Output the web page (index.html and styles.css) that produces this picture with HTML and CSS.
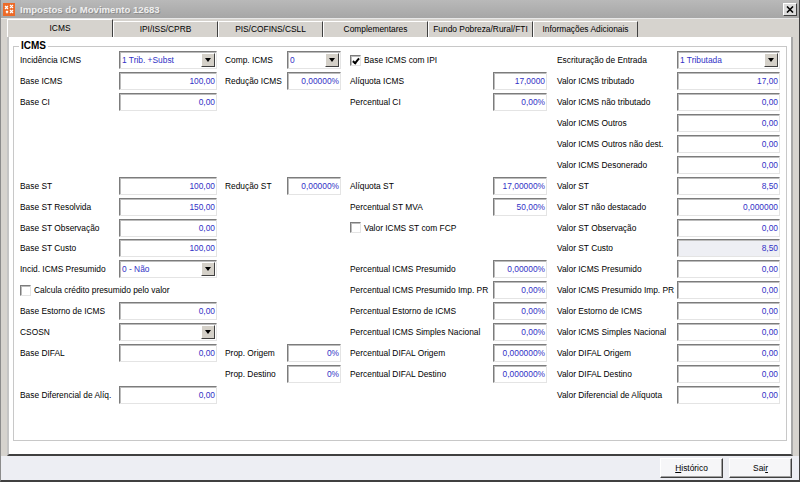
FILE: index.html
```html
<!DOCTYPE html>
<html lang="pt-BR">

<head>
  <meta charset="UTF-8" />
  <meta name="viewport" content="width=device-width, initial-scale=1.0" />
  <title>Impostos do Movimento 12683</title>
  <link rel="stylesheet" href="styles.css">
</head>

<body>
  <div class="window">
    <div class="titlebar">
      <svg class="app-icon" width="12" height="13" viewBox="0 0 12 13">
        <rect width="12" height="13" fill="#ec6a28" />
        <path d="M2 3l3 3M5 3L2 6M7 7l3 3M10 7l-3 3M3 8l2 2M5 8l-2 2M7 2l3 3M10 2L7 5" stroke="#fff" stroke-width="1.2" />
      </svg>
      <span class="title">Impostos do Movimento 12683</span>
      <button class="close">
        <svg width="8" height="7" viewBox="0 0 8 7"><path d="M1 0.5l6 6M7 0.5l-6 6" stroke="#000" stroke-width="1.6" /></svg>
      </button>
    </div>

    <ul class="tabs">
      <li class="active">ICMS</li>
      <li>IPI/ISS/CPRB</li>
      <li>PIS/COFINS/CSLL</li>
      <li>Complementares</li>
      <li>Fundo Pobreza/Rural/FTI</li>
      <li>Informações Adicionais</li>
    </ul>

    <div class="panel">
      <fieldset class="group">
        <legend>ICMS</legend>
        <div class="form">
          <!-- linha 1 -->
          <span class="lbl">Incidência ICMS</span>
          <div class="combo"><span>1 Trib. +Subst</span><i class="arrow"></i></div>
          <span class="lbl c3">Comp. ICMS</span>
          <div class="combo"><span>0</span><i class="arrow"></i></div>
          <label class="check c5 span2"><i class="box checked"></i>Base ICMS com IPI</label>
          <span class="lbl c7">Escrituração de Entrada</span>
          <div class="combo"><span>1 Tributada</span><i class="arrow"></i></div>

          <span class="lbl">Base ICMS</span>
          <div class="field">100,00</div>
          <span class="lbl c3">Redução ICMS</span>
          <div class="field">0,00000%</div>
          <span class="lbl c5">Alíquota ICMS</span>
          <div class="field">17,0000</div>
          <span class="lbl c7">Valor ICMS tributado</span>
          <div class="field">17,00</div>

          <span class="lbl">Base CI</span>
          <div class="field">0,00</div>
          <span class="span2"></span>
          <span class="lbl c5">Percentual CI</span>
          <div class="field">0,00%</div>
          <span class="lbl c7">Valor ICMS não tributado</span>
          <div class="field">0,00</div>

          <span class="span6"></span>
          <span class="lbl c7">Valor ICMS Outros</span>
          <div class="field">0,00</div>

          <span class="span6"></span>
          <span class="lbl c7">Valor ICMS Outros não dest.</span>
          <div class="field">0,00</div>

          <span class="span6"></span>
          <span class="lbl c7">Valor ICMS Desonerado</span>
          <div class="field">0,00</div>

          <!-- substituição tributária -->
          <span class="lbl">Base ST</span>
          <div class="field">100,00</div>
          <span class="lbl c3">Redução ST</span>
          <div class="field">0,00000%</div>
          <span class="lbl c5">Alíquota ST</span>
          <div class="field">17,00000%</div>
          <span class="lbl c7">Valor ST</span>
          <div class="field">8,50</div>

          <span class="lbl">Base ST Resolvida</span>
          <div class="field">150,00</div>
          <span class="span2"></span>
          <span class="lbl c5">Percentual ST MVA</span>
          <div class="field">50,00%</div>
          <span class="lbl c7">Valor ST não destacado</span>
          <div class="field">0,000000</div>

          <span class="lbl">Base ST Observação</span>
          <div class="field">0,00</div>
          <span class="span2"></span>
          <label class="check c5 span2"><i class="box"></i>Valor ICMS ST com FCP</label>
          <span class="lbl c7">Valor ST Observação</span>
          <div class="field">0,00</div>

          <span class="lbl">Base ST Custo</span>
          <div class="field">100,00</div>
          <span class="span4"></span>
          <span class="lbl c7">Valor ST Custo</span>
          <div class="field disabled">8,50</div>

          <!-- presumido -->
          <span class="lbl">Incid. ICMS Presumido</span>
          <div class="combo"><span>0 - Não</span><i class="arrow"></i></div>
          <span class="span2"></span>
          <span class="lbl c5">Percentual ICMS Presumido</span>
          <div class="field">0,00000%</div>
          <span class="lbl c7">Valor ICMS Presumido</span>
          <div class="field">0,00</div>

          <label class="check span4"><i class="box"></i>Calcula crédito presumido pelo valor</label>
          <span class="lbl c5">Percentual ICMS Presumido Imp. PR</span>
          <div class="field">0,00%</div>
          <span class="lbl c7">Valor ICMS Presumido Imp. PR</span>
          <div class="field">0,00</div>

          <span class="lbl">Base Estorno de ICMS</span>
          <div class="field">0,00</div>
          <span class="span2"></span>
          <span class="lbl c5">Percentual Estorno de ICMS</span>
          <div class="field">0,00%</div>
          <span class="lbl c7">Valor Estorno de ICMS</span>
          <div class="field">0,00</div>

          <span class="lbl">CSOSN</span>
          <div class="combo"><span></span><i class="arrow"></i></div>
          <span class="span2"></span>
          <span class="lbl c5">Percentual ICMS Simples Nacional</span>
          <div class="field">0,00%</div>
          <span class="lbl c7">Valor ICMS Simples Nacional</span>
          <div class="field">0,00</div>

          <!-- difal -->
          <span class="lbl">Base DIFAL</span>
          <div class="field">0,00</div>
          <span class="lbl c3">Prop. Origem</span>
          <div class="field">0%</div>
          <span class="lbl c5">Percentual DIFAL Origem</span>
          <div class="field">0,000000%</div>
          <span class="lbl c7">Valor DIFAL Origem</span>
          <div class="field">0,00</div>

          <span class="span2"></span>
          <span class="lbl c3">Prop. Destino</span>
          <div class="field">0%</div>
          <span class="lbl c5">Percentual DIFAL Destino</span>
          <div class="field">0,000000%</div>
          <span class="lbl c7">Valor DIFAL Destino</span>
          <div class="field">0,00</div>

          <span class="lbl">Base Diferencial de Alíq.</span>
          <div class="field">0,00</div>
          <span class="span4"></span>
          <span class="lbl c7">Valor Diferencial de Alíquota</span>
          <div class="field">0,00</div>
        </div>
      </fieldset>
    </div>

    <div class="footer">
      <button class="btn"><u>H</u>istórico</button>
      <button class="btn">Sai<u>r</u></button>
    </div>
  </div>
</body>

</html>
```

FILE: styles.css
```css
* {
  box-sizing: border-box;
}

body {
  margin: 0;
  font-family: "Liberation Sans", Arial, sans-serif;
  font-size: 8.4px;
  color: #000;
  background: #d6d3ce;
}

.window {
  width: 800px;
  height: 482px;
  display: flex;
  flex-direction: column;
  background: #d6d3ce;
  border-left: 1px solid #8c8c8c;
  border-right: 1px solid #404040;
  border-bottom: 2px solid #404040;
}

/* barra de título */
.titlebar {
  height: 19px;
  display: flex;
  align-items: center;
  padding: 0 2px 0 2px;
  background: linear-gradient(#b9b9b9, #a6a6a6);
  border-bottom: 1px solid #e8e8e8;
}

.app-icon {
  display: block;
  margin-right: 5px;
}

.title {
  flex: 1;
  font-size: 9.6px;
  font-weight: bold;
  color: #eeeeee;
  text-shadow: 1px 1px 0 #8e8e8e;
}

.close {
  width: 14px;
  height: 13px;
  padding: 0;
  display: flex;
  align-items: center;
  justify-content: center;
  background: #dcdcdc;
  border: 1px solid;
  border-color: #fff #404040 #404040 #fff;
}

/* abas */
.tabs {
  margin: 0;
  padding: 0 0 0 6px;
  list-style: none;
  display: flex;
  height: 18px;
}

.tabs li {
  width: 105px;
  height: 16px;
  margin-top: 2px;
  line-height: 14px;
  text-align: center;
  border-left: 1px solid #fff;
  border-top: 1px solid #fff;
  border-right: 1px solid #404040;
}

.tabs li.active {
  width: 106px;
  height: 18px;
  margin-top: 0;
  line-height: 16px;
}

/* painel branco */
.panel {
  flex: 1;
  margin: 0 6px;
  padding: 3px 4px 0 4px;
  background: #fff;
  border-left: 2px solid #c4c4c4;
  border-right: 2px solid #a8a8a8;
  border-bottom: 2px solid #404040;
}

.group {
  margin: 0;
  height: 401px;
  padding: 0 0 0 6px;
  border: 1px solid #c8c8c8;
}

.group legend {
  padding: 0 2px;
  margin-left: -1px;
  font-size: 10px;
  font-weight: bold;
  line-height: 12px;
}

.form {
  margin-top: -2px;
  display: grid;
  grid-template-columns: 99px 98px 70px 54px 152px 54px 130px 103px;
  grid-auto-rows: 20.9px;
  align-items: center;
}

.lbl {
  white-space: nowrap;
}

.c3 {
  padding-left: 8px;
}

.c5 {
  padding-left: 9px;
}

.c7 {
  padding-left: 10px;
}

.span2 {
  grid-column: span 2;
}

.span4 {
  grid-column: span 4;
}

.span6 {
  grid-column: span 6;
}

/* campos */
.field,
.combo {
  height: 18px;
  background: #fff;
  color: #3232c6;
  border: 1px solid;
  border-color: #7c7c7c #e4e4e4 #e4e4e4 #7c7c7c;
  box-shadow: inset 1px 1px 0 #bcbcbc;
}

.field {
  line-height: 16px;
  text-align: right;
  padding-right: 1px;
}

.field.disabled {
  background: #eeeff4;
}

.combo {
  display: flex;
  align-items: center;
  padding: 0 1px 0 2px;
}

.combo span {
  flex: 1;
  white-space: nowrap;
}

.arrow {
  width: 14px;
  height: 14px;
  display: flex;
  align-items: center;
  justify-content: center;
  background: #d4d0c8;
  border: 1px solid;
  border-color: #fff #404040 #404040 #fff;
}

.arrow::after {
  content: "";
  border-left: 3.5px solid transparent;
  border-right: 3.5px solid transparent;
  border-top: 4px solid #000;
}

.check {
  display: flex;
  align-items: center;
  white-space: nowrap;
}

.box {
  width: 11px;
  height: 11px;
  margin-right: 3px;
  background: #fff;
  border: 1px solid;
  border-color: #7c7c7c #e4e4e4 #e4e4e4 #7c7c7c;
  box-shadow: inset 1px 1px 0 #bcbcbc;
  position: relative;
}

.box.checked::after {
  content: "";
  position: absolute;
  left: 3px;
  top: 1px;
  width: 2px;
  height: 5px;
  border: solid #000;
  border-width: 0 2px 2px 0;
  transform: rotate(40deg);
}

/* rodapé */
.footer {
  height: 24px;
  display: flex;
  justify-content: flex-end;
  gap: 6px;
  padding: 2px 7px 0 0;
  background: #edeef3;
}

.btn {
  width: 63px;
  height: 20px;
  padding: 0;
  font-family: inherit;
  font-size: 8.4px;
  color: #000;
  background: #f6f6f8;
  border: 1px solid;
  border-color: #fff #404040 #404040 #fff;
  box-shadow: inset -1px -1px 0 #a0a0a0;
}
```
